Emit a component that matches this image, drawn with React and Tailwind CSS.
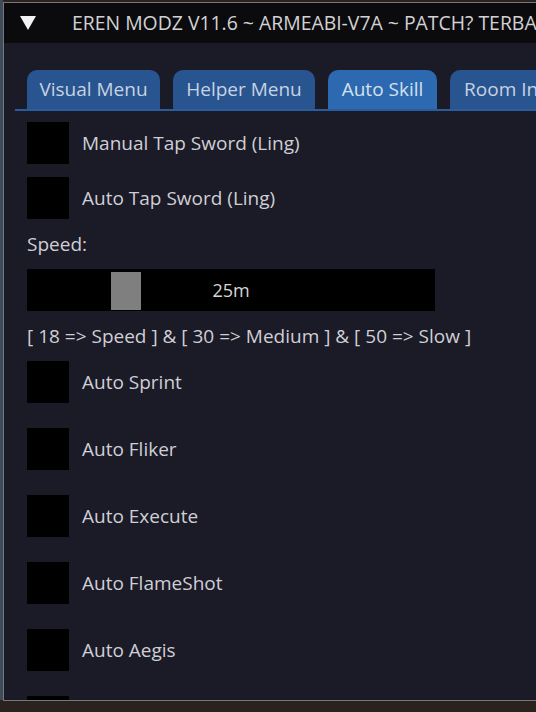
import React from "react";

const font = { fontFamily: '"Open Sans", "Noto Sans", sans-serif' };

function Check({ label, className = "" }) {
  return (
    <div className={"flex items-center " + className}>
      <div className="w-[42px] h-[42px] bg-black shrink-0" />
      {label ? (
        <span className="ml-[13px] text-[19px] text-[#cfcfd4] whitespace-nowrap">{label}</span>
      ) : null}
    </div>
  );
}

export default function App() {
  const tabs = [
    { t: "Visual Menu", w: "w-[133px]" },
    { t: "Helper Menu", w: "w-[142px]" },
    { t: "Auto Skill", w: "w-[109px]", active: true },
    { t: "Room Info", w: "w-[120px]" },
  ];
  return (
    <div className="w-[536px] h-[712px] overflow-hidden bg-[#2a221f] relative" style={font}>
      <div className="absolute left-0 top-0 w-[3px] h-[700px] bg-[#3c4c5a]" />
      <div className="ml-[3px] mt-[2px] w-[560px] h-[699px] border border-[#77777c] bg-[#1b1a27] flex flex-col overflow-hidden">
        <div className="h-[40px] bg-[#0b0b0e] flex items-center shrink-0 overflow-hidden">
          <svg width="16" height="14" viewBox="0 0 16 14" className="ml-[16px] shrink-0">
            <polygon points="0,0 16,0 8,14" fill="#f2f2f2" />
          </svg>
          <span className="ml-[36px] shrink-0 text-[19.4px] text-[#d2d2d4] whitespace-nowrap">
            EREN MODZ V11.6 ~ ARMEABI-V7A ~ PATCH? TERBARU
          </span>
        </div>
        <div className="ml-[11px] mt-[27px] flex gap-[13px] pl-[12px] border-b-2 border-[#2b5c9c] h-[41px] shrink-0 items-end">
          {tabs.map((x) => (
            <div
              key={x.t}
              className={
                "h-[39px] rounded-t-[10px] flex items-center justify-center shrink-0 text-[19px] whitespace-nowrap overflow-hidden " +
                x.w +
                (x.active ? " bg-[#2d69b0] text-[#d5e0ee]" : " bg-[#28558f] text-[#c7d2e2]")
              }
            >
              {x.t}
            </div>
          ))}
        </div>
        <div className="pl-[23px] flex flex-col">
          <Check label="Manual Tap Sword (Ling)" className="mt-[11px]" />
          <Check label="Auto Tap Sword (Ling)" className="mt-[13px]" />
          <div className="mt-[12px] text-[19px] text-[#cfcfd4] leading-[26px]">Speed:</div>
          <div className="mt-[12px] w-[408px] h-[42px] bg-black relative flex items-center justify-center">
            <div className="absolute left-[84px] top-[3px] w-[30px] h-[38px] bg-[#7f7f7f]" />
            <span className="text-[18px] text-[#d6d6d8]">25m</span>
          </div>
          <div className="mt-[12px] text-[19px] text-[#cfcfd4] whitespace-nowrap leading-[26px]">
            [ 18 =&gt; Speed ] &amp; [ 30 =&gt; Medium ] &amp; [ 50 =&gt; Slow ]
          </div>
          <Check label="Auto Sprint" className="mt-[12px]" />
          <Check label="Auto Fliker" className="mt-[25px]" />
          <Check label="Auto Execute" className="mt-[25px]" />
          <Check label="Auto FlameShot" className="mt-[25px]" />
          <Check label="Auto Aegis" className="mt-[25px]" />
          <Check className="mt-[25px]" />
        </div>
      </div>
    </div>
  );
}
